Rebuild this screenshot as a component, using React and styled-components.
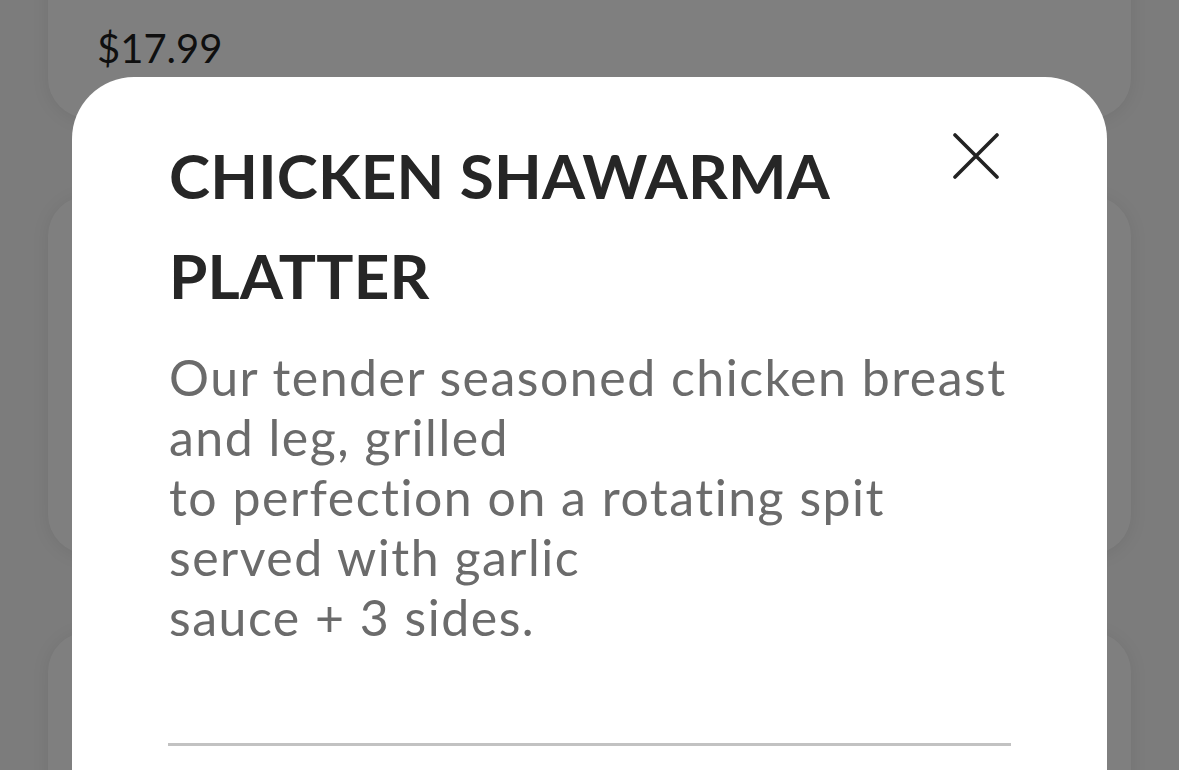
import React from "react";
import styled, { createGlobalStyle } from "styled-components";

const Global = createGlobalStyle`
  html, body { margin: 0; padding: 0; }
  body {
    width: 1179px;
    height: 770px;
    overflow: hidden;
    background: #f8f8f8;
    font-family: Lato, "Open Sans", "Liberation Sans", sans-serif;
  }
`;

const Page = styled.div`
  position: relative;
  width: 1179px;
  height: 770px;
  overflow: hidden;
  background: #f8f8f8;
`;

const CardList = styled.div`
  display: flex;
  flex-direction: column;
  gap: 78px;
  padding: 0 48px;
  margin-top: -80px;
`;

const Card = styled.div`
  background: #ffffff;
  border-radius: 40px;
  box-shadow: 0 2px 18px rgba(0, 0, 0, 0.08);
  height: ${(p) => p.$h}px;
  box-sizing: border-box;
  padding: ${(p) => p.$pad || "0"};
  display: flex;
  flex-direction: column;
  justify-content: flex-end;
`;

const Price = styled.div`
  font-family: Lato, "Liberation Sans", sans-serif;
  font-size: 40px;
  color: #1f1f1f;
  letter-spacing: 0;
`;

const Overlay = styled.div`
  position: absolute;
  inset: 0;
  background: rgba(0, 0, 0, 0.5);
`;

const Sheet = styled.div`
  position: absolute;
  left: 72px;
  top: 77px;
  width: 1035px;
  height: 760px;
  background: #ffffff;
  border-radius: 62px 62px 0 0;
  box-sizing: border-box;
  padding: 48px 96px 0 97px;
  display: flex;
  flex-direction: column;
`;

const Header = styled.div`
  display: flex;
  align-items: flex-start;
  justify-content: space-between;
`;

const Title = styled.h1`
  margin: 0;
  font-family: Lato, "Open Sans", sans-serif;
  font-weight: 700;
  font-size: 62px;
  line-height: 100px;
  color: #262626;
  max-width: 720px;
  letter-spacing: 0.2px;
`;

const CloseButton = styled.button`
  border: none;
  background: transparent;
  padding: 0;
  margin: 8px 12px 0 0;
  width: 46px;
  height: 46px;
  display: flex;
  align-items: center;
  justify-content: center;
  cursor: pointer;
`;

const Description = styled.p`
  margin: 22px 0 0;
  font-family: Lato, "Open Sans", sans-serif;
  font-size: 50px;
  line-height: 60px;
  color: #6b6b6b;
  letter-spacing: 1.5px;
  font-variant-ligatures: none;
`;

const Divider = styled.hr`
  margin: 96px 0 0 -1px;
  border: none;
  height: 3px;
  background: #c2c2c2;
  width: 843px;
`;

export default function App() {
  return (
    <Page>
      <Global />
      <CardList>
        <Card $h={198} $pad="0 49px 46px">
          <Price>$17.99</Price>
        </Card>
        <Card $h={358} />
        <Card $h={360} />
      </CardList>
      <Overlay />
      <Sheet>
        <Header>
          <Title>CHICKEN SHAWARMA PLATTER</Title>
          <CloseButton aria-label="Close">
            <svg width="46" height="46" viewBox="0 0 46 46" fill="none">
              <path
                d="M2 2 L44 44 M44 2 L2 44"
                stroke="#222222"
                strokeWidth="3.6"
                strokeLinecap="round"
              />
            </svg>
          </CloseButton>
        </Header>
        <Description>
          Our tender seasoned chicken breast
          <br />
          and leg, grilled
          <br />
          to perfection on a rotating spit
          <br />
          served with garlic
          <br />
          sauce + 3 sides.
        </Description>
        <Divider />
      </Sheet>
    </Page>
  );
}
